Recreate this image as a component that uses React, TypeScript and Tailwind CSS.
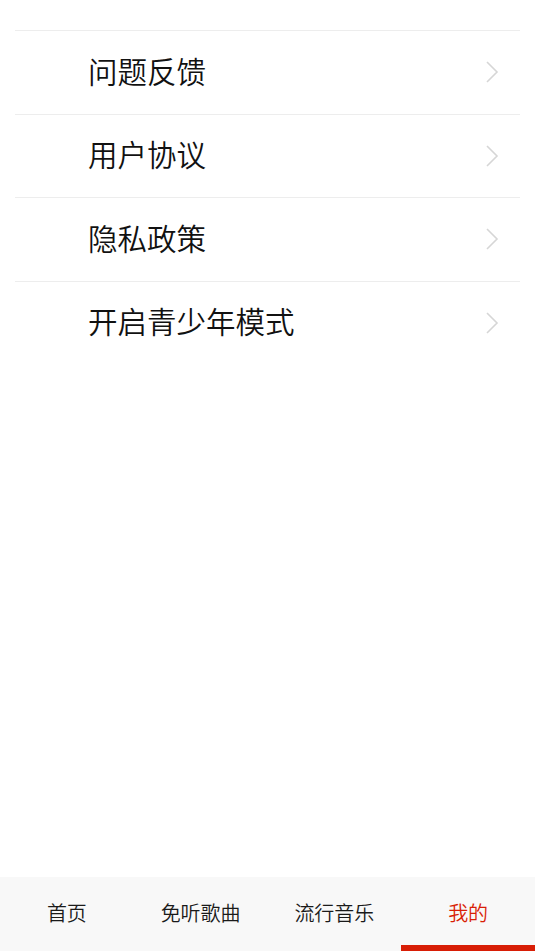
import { useState } from 'react'

const items = ['问题反馈', '用户协议', '隐私政策', '开启青少年模式']
const tabs = ['首页', '免听歌曲', '流行音乐', '我的']

const Chevron = () => (
  <svg width="14" height="24" viewBox="0 0 14 24" fill="none">
    <path d="M2 2 L12 12 L2 22" stroke="#d6d6d6" strokeWidth="1.6" />
  </svg>
)

const App = () => {
  const [active, setActive] = useState(3)

  return (
    <div
      className="flex flex-col h-screen bg-white"
      style={{ fontFamily: '"Noto Sans CJK SC", "Noto Sans", sans-serif' }}
    >
      <div className="flex-1 px-[15px]">
        <div className="h-[30px]" />
        {items.map((title) => (
          <div
            key={title}
            className="flex items-center justify-between h-[83.5px] border-t border-[#ededed] pl-[73px] pr-[21px]"
          >
            <span className="text-[29.5px] leading-none font-[350] text-[#111] mb-[4px]">{title}</span>
            <Chevron />
          </div>
        ))}
      </div>

      {/* bottom tabs */}
      <div className="grid grid-cols-4 h-[74px] bg-[#f8f8f8]">
        {tabs.map((t, i) => (
          <button
            key={t}
            onClick={() => setActive(i)}
            className="relative flex items-center justify-center pb-[2px]"
          >
            <span
              className={
                i === active
                  ? 'text-[20px] leading-none font-[350] text-[#d81e06]'
                  : 'text-[20px] leading-none font-[350] text-[#1a1a1a]'
              }
            >
              {t}
            </span>
            {i === active && (
              <span className="absolute left-0 right-0 bottom-0 h-[6px] bg-[#d81e06]" />
            )}
          </button>
        ))}
      </div>
    </div>
  )
}

export default App
